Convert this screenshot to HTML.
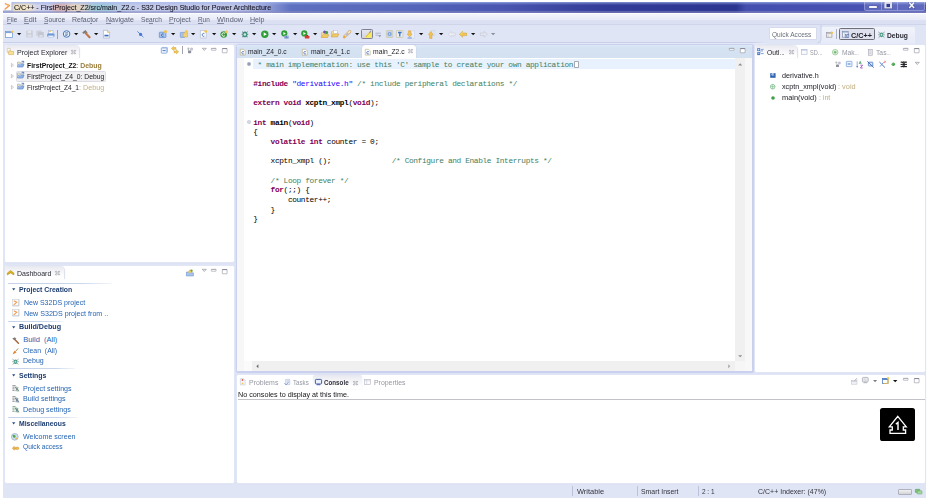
<!DOCTYPE html>
<html><head><meta charset="utf-8"><title>S32 Design Studio</title>
<style>
html,body{margin:0;padding:0;}
body{width:930px;height:500px;overflow:hidden;background:#fff;position:relative;font-family:"Liberation Sans",sans-serif;}
.r{position:absolute;display:block;box-sizing:border-box;}
.t{position:absolute;display:block;white-space:pre;line-height:10px;height:10px;transform-origin:0 50%;font-family:"Liberation Sans",sans-serif;}
.p{position:absolute;box-sizing:border-box;background:#fff;border:0.5px solid #e1e6f6;border-radius:2.5px;box-shadow:0.2px 0.3px 0.5px rgba(195,202,235,0.25);}
</style></head><body>
<div class="r" style="left:3.00px;top:13.50px;width:922.90px;height:484.00px;background:#e0e5f6;"></div>
<div class="r" style="left:3.00px;top:2.00px;width:922.90px;height:10.70px;background:linear-gradient(to right,#b9c2ea 0px,#bcc4ea 120px,#b4bce6 232px,#8f9bd6 266px,#5e70c0 288px,#5566ba 400px,#4a56b0 500px,#333c98 600px,#2b3590 733px,#444eae 743px,#4853b4 923px);"></div>
<div class="r" style="left:13.00px;top:2.60px;width:261.00px;height:9.40px;background:linear-gradient(to right,rgba(246,230,190,0.95) 0px,rgba(246,232,196,0.9) 15px,rgba(226,226,240,0.6) 24px,rgba(214,214,236,0.5) 36px,rgba(222,170,160,0.8) 44px,rgba(224,176,164,0.8) 52px,rgba(240,220,184,0.8) 60px,rgba(236,216,184,0.7) 70px,rgba(156,204,212,0.85) 80px,rgba(150,200,214,0.8) 94px,rgba(180,206,228,0.6) 104px,rgba(205,210,236,0.5) 122px,rgba(200,205,236,0.45) 226px,rgba(200,204,236,0) 258px);filter:blur(1.1px);"></div>
<div class="r" style="left:3.00px;top:2.00px;width:922.90px;height:10.70px;background:linear-gradient(to bottom,rgba(170,190,240,0.7) 0px,rgba(160,180,235,0.3) 1.6px,rgba(255,255,255,0) 3.2px,rgba(255,255,255,0) 8.4px,rgba(134,140,196,0.5) 9.4px,rgba(138,140,190,0.62) 10.7px);"></div>
<div class="r" style="left:3.00px;top:13.50px;width:922.90px;height:11.10px;background:linear-gradient(to bottom,#f2f4fb 0px,#e9ecf8 5.6px,#dadff2 6.6px,#dbe0f3 10.2px,#cfd4ea 10.5px,#d3d8ec 11.1px);"></div>
<div class="r" style="left:3.00px;top:42.00px;width:764.00px;height:1.00px;background:linear-gradient(to right,#c9cfe8 0%,#c9cfe8 98%,#dfe4f5 100%);"></div>
<div class="r" style="left:3.00px;top:43.00px;width:764.00px;height:0.80px;background:#e6eaf8;"></div>
<div class="p" style="left:3.90px;top:43.90px;width:230.80px;height:219.10px;"></div>
<div class="p" style="left:3.90px;top:264.50px;width:230.80px;height:219.60px;"></div>
<div class="p" style="left:236.20px;top:43.80px;width:516.70px;height:328.70px;border:1px solid #cad1ee;box-shadow:0.4px 0.6px 0.9px rgba(180,188,228,0.55);"></div>
<div class="p" style="left:753.60px;top:43.90px;width:172.00px;height:328.70px;"></div>
<div class="p" style="left:236.40px;top:374.00px;width:689.20px;height:110.00px;"></div>
<div class="r" style="left:237.40px;top:44.80px;width:514.40px;height:13.60px;background:linear-gradient(to bottom,#dde8f6 0px,#d5e2f2 3px,#d3e1f1 13.6px);border-radius:2px 2px 0 0;"></div>
<div class="r" style="left:361.50px;top:44.60px;width:54.30px;height:14.00px;background:#fff;border-radius:3px 3px 0 0;box-shadow:0 0 0.8px rgba(140,160,200,0.9);"></div>
<div class="r" style="left:361.50px;top:57.00px;width:54.30px;height:1.80px;background:#fff;"></div>
<div class="r" style="left:237.40px;top:58.40px;width:6.20px;height:312.60px;background:#f7f7f8;"></div>
<div class="r" style="left:253.00px;top:59.40px;width:481.80px;height:9.40px;background:#e8f2fe;"></div>
<div class="r" style="left:735.20px;top:58.40px;width:9.60px;height:302.80px;background:#f0f0f0;"></div>
<div class="r" style="left:744.80px;top:58.40px;width:7.00px;height:312.60px;background:#f8f8f8;"></div>
<div class="r" style="left:252.20px;top:361.20px;width:483.00px;height:9.60px;background:#f0f0f0;"></div>
<div class="r" style="left:735.20px;top:361.20px;width:9.60px;height:9.80px;background:#f6f6f6;"></div>
<div class="r" style="left:243.60px;top:361.20px;width:8.60px;height:9.80px;background:#fbfbfb;"></div>
<span class="t" style="left:14.30px;top:3.00px;font-size:7.7px;color:#14141f;transform:scaleX(0.9187);-webkit-text-stroke:0.1px #14141f;">C/C++ - FirstProject_Z2/src/main_Z2.c - S32 Design Studio for Power Architecture</span>
<span class="t" style="left:6.80px;top:15.00px;font-size:7.5px;color:#5c6074;transform:scaleX(0.8440);">File</span>
<div class="r" style="left:6.80px;top:22.75px;width:3.87px;height:0.50px;background:#868aa0;"></div>
<span class="t" style="left:24.10px;top:15.00px;font-size:7.5px;color:#5c6074;transform:scaleX(0.9672);">Edit</span>
<div class="r" style="left:24.10px;top:22.75px;width:4.84px;height:0.50px;background:#868aa0;"></div>
<span class="t" style="left:43.70px;top:15.00px;font-size:7.5px;color:#5c6074;transform:scaleX(0.8879);">Source</span>
<div class="r" style="left:43.70px;top:22.75px;width:4.44px;height:0.50px;background:#868aa0;"></div>
<span class="t" style="left:72.30px;top:15.00px;font-size:7.5px;color:#5c6074;transform:scaleX(0.9279);">Refactor</span>
<div class="r" style="left:90.48px;top:22.75px;width:1.93px;height:0.50px;background:#868aa0;"></div>
<span class="t" style="left:106.20px;top:15.00px;font-size:7.5px;color:#5c6074;transform:scaleX(0.9392);">Navigate</span>
<div class="r" style="left:106.20px;top:22.75px;width:5.09px;height:0.50px;background:#868aa0;"></div>
<span class="t" style="left:141.30px;top:15.00px;font-size:7.5px;color:#5c6074;transform:scaleX(0.8753);">Search</span>
<div class="r" style="left:149.33px;top:22.75px;width:3.65px;height:0.50px;background:#868aa0;"></div>
<span class="t" style="left:169.20px;top:15.00px;font-size:7.5px;color:#5c6074;transform:scaleX(0.9339);">Project</span>
<div class="r" style="left:169.20px;top:22.75px;width:4.67px;height:0.50px;background:#868aa0;"></div>
<span class="t" style="left:198.10px;top:15.00px;font-size:7.5px;color:#5c6074;transform:scaleX(0.8504);">Run</span>
<div class="r" style="left:198.10px;top:22.75px;width:4.61px;height:0.50px;background:#868aa0;"></div>
<span class="t" style="left:216.90px;top:15.00px;font-size:7.5px;color:#5c6074;transform:scaleX(0.9784);">Window</span>
<div class="r" style="left:216.90px;top:22.75px;width:6.93px;height:0.50px;background:#868aa0;"></div>
<span class="t" style="left:250.00px;top:15.00px;font-size:7.5px;color:#5c6074;transform:scaleX(0.9400);">Help</span>
<div class="r" style="left:250.00px;top:22.75px;width:5.09px;height:0.50px;background:#868aa0;"></div>
<div class="r" style="left:4.60px;top:44.60px;width:74.00px;height:13.80px;background:linear-gradient(to bottom,#e7e8ef 0%,#f3f3f7 35%,#fdfdfe 75%,#fff 100%);border-radius:3px 4.5px 0 0;box-shadow:0.5px 0 0.9px rgba(205,208,226,0.7);"></div>
<span class="t" style="left:16.80px;top:48.00px;font-size:7.5px;color:#2a2a34;transform:scaleX(0.9428);">Project Explorer</span>
<span class="t" style="left:26.70px;top:61.00px;font-size:7.5px;color:#111;font-weight:bold;transform:scaleX(0.9047);">FirstProject_Z2</span>
<span class="t" style="left:76.10px;top:61.00px;font-size:7.5px;color:#9a7d3c;font-weight:bold;transform:scaleX(0.9243);">: Debug</span>
<div class="r" style="left:15.50px;top:71.00px;width:90.30px;height:10.60px;background:#f0f0f2;border:1px solid #dcdce2;border-radius:1.5px;"></div>
<span class="t" style="left:26.70px;top:72.00px;font-size:7.5px;color:#1a1a22;transform:scaleX(0.9034);">FirstProject_Z4_0: Debug</span>
<span class="t" style="left:26.70px;top:83.00px;font-size:7.5px;color:#1a1a22;transform:scaleX(0.8786);">FirstProject_Z4_1</span>
<span class="t" style="left:78.70px;top:83.00px;font-size:7.5px;color:#c3b184;transform:scaleX(0.9593);">: Debug</span>
<span class="t" style="left:248.30px;top:47.00px;font-size:7.5px;color:#1c1c24;transform:scaleX(0.8926);">main_Z4_0.c</span>
<span class="t" style="left:310.50px;top:47.00px;font-size:7.5px;color:#1c1c24;transform:scaleX(0.8949);">main_Z4_1.c</span>
<span class="t" style="left:372.80px;top:47.00px;font-size:7.5px;color:#1c1c24;transform:scaleX(0.9025);">main_Z2.c</span>
<span class="t" style="left:257.62px;top:60.00px;font-size:7.8px;color:#3f7f5f;font-family:'Liberation Mono',monospace;letter-spacing:-0.356px;">* main implementation: use this 'C' sample to create your own application</span>
<span class="t" style="left:253.30px;top:79.00px;font-size:7.8px;color:#7f0055;font-weight:bold;font-family:'Liberation Mono',monospace;letter-spacing:-0.356px;">#include</span>
<span class="t" style="left:292.23px;top:79.00px;font-size:7.8px;color:#2a00ff;font-family:'Liberation Mono',monospace;letter-spacing:-0.356px;">"derivative.h"</span>
<span class="t" style="left:357.10px;top:79.00px;font-size:7.8px;color:#3f7f5f;font-family:'Liberation Mono',monospace;letter-spacing:-0.356px;">/* include peripheral declarations */</span>
<span class="t" style="left:253.30px;top:98.00px;font-size:7.8px;color:#7f0055;font-weight:bold;font-family:'Liberation Mono',monospace;letter-spacing:-0.356px;">extern</span>
<span class="t" style="left:283.57px;top:98.00px;font-size:7.8px;color:#7f0055;font-weight:bold;font-family:'Liberation Mono',monospace;letter-spacing:-0.356px;">void</span>
<span class="t" style="left:305.20px;top:98.00px;font-size:7.8px;color:#000000;font-weight:bold;font-family:'Liberation Mono',monospace;letter-spacing:-0.356px;">xcptn_xmpl</span>
<span class="t" style="left:348.45px;top:98.00px;font-size:7.8px;color:#000000;font-family:'Liberation Mono',monospace;letter-spacing:-0.356px;">(</span>
<span class="t" style="left:352.78px;top:98.00px;font-size:7.8px;color:#7f0055;font-weight:bold;font-family:'Liberation Mono',monospace;letter-spacing:-0.356px;">void</span>
<span class="t" style="left:370.08px;top:98.00px;font-size:7.8px;color:#000000;font-family:'Liberation Mono',monospace;letter-spacing:-0.356px;">);</span>
<span class="t" style="left:253.30px;top:118.00px;font-size:7.8px;color:#7f0055;font-weight:bold;font-family:'Liberation Mono',monospace;letter-spacing:-0.356px;">int</span>
<span class="t" style="left:270.60px;top:118.00px;font-size:7.8px;color:#000000;font-weight:bold;font-family:'Liberation Mono',monospace;letter-spacing:-0.356px;">main</span>
<span class="t" style="left:287.90px;top:118.00px;font-size:7.8px;color:#000000;font-family:'Liberation Mono',monospace;letter-spacing:-0.356px;">(</span>
<span class="t" style="left:292.23px;top:118.00px;font-size:7.8px;color:#7f0055;font-weight:bold;font-family:'Liberation Mono',monospace;letter-spacing:-0.356px;">void</span>
<span class="t" style="left:309.53px;top:118.00px;font-size:7.8px;color:#000000;font-family:'Liberation Mono',monospace;letter-spacing:-0.356px;">)</span>
<span class="t" style="left:253.30px;top:127.00px;font-size:7.8px;color:#000000;font-family:'Liberation Mono',monospace;letter-spacing:-0.356px;">{</span>
<span class="t" style="left:270.60px;top:137.00px;font-size:7.8px;color:#7f0055;font-weight:bold;font-family:'Liberation Mono',monospace;letter-spacing:-0.356px;">volatile</span>
<span class="t" style="left:309.53px;top:137.00px;font-size:7.8px;color:#7f0055;font-weight:bold;font-family:'Liberation Mono',monospace;letter-spacing:-0.356px;">int</span>
<span class="t" style="left:326.83px;top:137.00px;font-size:7.8px;color:#000000;font-family:'Liberation Mono',monospace;letter-spacing:-0.356px;">counter = 0;</span>
<span class="t" style="left:270.60px;top:156.00px;font-size:7.8px;color:#000000;font-family:'Liberation Mono',monospace;letter-spacing:-0.356px;">xcptn_xmpl ();</span>
<span class="t" style="left:391.70px;top:156.00px;font-size:7.8px;color:#3f7f5f;font-family:'Liberation Mono',monospace;letter-spacing:-0.356px;">/* Configure and Enable Interrupts */</span>
<span class="t" style="left:270.60px;top:176.00px;font-size:7.8px;color:#3f7f5f;font-family:'Liberation Mono',monospace;letter-spacing:-0.356px;">/* Loop forever */</span>
<span class="t" style="left:270.60px;top:185.00px;font-size:7.8px;color:#7f0055;font-weight:bold;font-family:'Liberation Mono',monospace;letter-spacing:-0.356px;">for</span>
<span class="t" style="left:283.57px;top:185.00px;font-size:7.8px;color:#000000;font-family:'Liberation Mono',monospace;letter-spacing:-0.356px;">(;;) {</span>
<span class="t" style="left:287.90px;top:195.00px;font-size:7.8px;color:#000000;font-family:'Liberation Mono',monospace;letter-spacing:-0.356px;">counter++;</span>
<span class="t" style="left:270.60px;top:205.00px;font-size:7.8px;color:#000000;font-family:'Liberation Mono',monospace;letter-spacing:-0.356px;">}</span>
<span class="t" style="left:253.30px;top:214.00px;font-size:7.8px;color:#000000;font-family:'Liberation Mono',monospace;letter-spacing:-0.356px;">}</span>
<div class="r" style="left:4.60px;top:265.80px;width:59.00px;height:13.60px;background:linear-gradient(to bottom,#e7e8ef 0%,#f3f3f7 35%,#fdfdfe 75%,#fff 100%);border-radius:3px 4.5px 0 0;box-shadow:0.5px 0 0.9px rgba(205,208,226,0.7);"></div>
<span class="t" style="left:16.80px;top:269.00px;font-size:7.5px;color:#2a2a34;transform:scaleX(0.9348);">Dashboard</span>
<div class="r" style="left:8.40px;top:282.80px;width:103.60px;height:1.10px;background:linear-gradient(to right,#c3d2ea 0%,#c9d7ec 70%,rgba(215,225,240,0.3) 100%);border-radius:1px;"></div>
<svg class="r" style="left:11.70px;top:288.10px" width="4" height="3" viewBox="0 0 4 3"><path d="M0.1,0.2 L3.3,0.2 L1.7,2.4 Z" fill="#2a4a80"/></svg>
<span class="t" style="left:18.80px;top:285.00px;font-size:7.5px;color:#1c3c70;font-weight:bold;transform:scaleX(0.9201);">Project Creation</span>
<span class="t" style="left:23.60px;top:298.00px;font-size:7.5px;color:#2565b4;transform:scaleX(0.9336);">New S32DS project</span>
<span class="t" style="left:23.60px;top:309.00px;font-size:7.5px;color:#2565b4;transform:scaleX(0.9484);">New S32DS project from ..</span>
<div class="r" style="left:8.40px;top:320.60px;width:55.30px;height:1.10px;background:linear-gradient(to right,#c3d2ea 0%,#c9d7ec 70%,rgba(215,225,240,0.3) 100%);border-radius:1px;"></div>
<svg class="r" style="left:11.70px;top:325.60px" width="4" height="3" viewBox="0 0 4 3"><path d="M0.1,0.2 L3.3,0.2 L1.7,2.4 Z" fill="#2a4a80"/></svg>
<span class="t" style="left:18.80px;top:322.00px;font-size:7.5px;color:#1c3c70;font-weight:bold;transform:scaleX(0.9533);">Build/Debug</span>
<span class="t" style="left:23.20px;top:335.00px;font-size:7.5px;color:#2565b4;">Build  (All)</span>
<span class="t" style="left:23.20px;top:346.00px;font-size:7.5px;color:#2565b4;transform:scaleX(0.9193);">Clean  (All)</span>
<span class="t" style="left:23.20px;top:356.00px;font-size:7.5px;color:#2565b4;transform:scaleX(0.9366);">Debug</span>
<div class="r" style="left:8.40px;top:368.00px;width:66.40px;height:1.10px;background:linear-gradient(to right,#c3d2ea 0%,#c9d7ec 70%,rgba(215,225,240,0.3) 100%);border-radius:1px;"></div>
<svg class="r" style="left:11.70px;top:374.20px" width="4" height="3" viewBox="0 0 4 3"><path d="M0.1,0.2 L3.3,0.2 L1.7,2.4 Z" fill="#2a4a80"/></svg>
<span class="t" style="left:18.80px;top:371.00px;font-size:7.5px;color:#1c3c70;font-weight:bold;transform:scaleX(0.9295);">Settings</span>
<span class="t" style="left:22.90px;top:384.00px;font-size:7.5px;color:#2565b4;transform:scaleX(0.9479);">Project settings</span>
<span class="t" style="left:22.90px;top:394.00px;font-size:7.5px;color:#2565b4;transform:scaleX(0.9550);">Build settings</span>
<span class="t" style="left:22.90px;top:405.00px;font-size:7.5px;color:#2565b4;transform:scaleX(0.9554);">Debug settings</span>
<div class="r" style="left:8.40px;top:417.10px;width:69.60px;height:1.10px;background:linear-gradient(to right,#c3d2ea 0%,#c9d7ec 70%,rgba(215,225,240,0.3) 100%);border-radius:1px;"></div>
<svg class="r" style="left:11.70px;top:422.30px" width="4" height="3" viewBox="0 0 4 3"><path d="M0.1,0.2 L3.3,0.2 L1.7,2.4 Z" fill="#2a4a80"/></svg>
<span class="t" style="left:18.80px;top:419.00px;font-size:7.5px;color:#1c3c70;font-weight:bold;transform:scaleX(0.9109);">Miscellaneous</span>
<span class="t" style="left:22.90px;top:432.00px;font-size:7.5px;color:#2565b4;transform:scaleX(0.9423);">Welcome screen</span>
<span class="t" style="left:22.90px;top:442.00px;font-size:7.5px;color:#2565b4;transform:scaleX(0.8857);">Quick access</span>
<div class="r" style="left:312.60px;top:374.90px;width:49.00px;height:13.90px;background:linear-gradient(to bottom,#e7e8ef 0%,#f3f3f7 35%,#fdfdfe 75%,#fff 100%);border-radius:3px 3px 0 0;box-shadow:0 0 0.9px rgba(190,195,220,0.9);"></div>
<span class="t" style="left:248.90px;top:378.00px;font-size:7.5px;color:#9698a2;transform:scaleX(0.9281);">Problems</span>
<span class="t" style="left:293.20px;top:378.00px;font-size:7.5px;color:#9698a2;transform:scaleX(0.8189);">Tasks</span>
<span class="t" style="left:324.40px;top:378.00px;font-size:7.5px;color:#30303a;font-weight:bold;transform:scaleX(0.8315);">Console</span>
<span class="t" style="left:373.50px;top:378.00px;font-size:7.5px;color:#9698a2;transform:scaleX(0.9215);">Properties</span>
<span class="t" style="left:238.10px;top:390.00px;font-size:7.5px;color:#16161a;transform:scaleX(0.9604);">No consoles to display at this time.</span>
<div class="r" style="left:238.00px;top:399.00px;width:686.60px;height:0.80px;background:#c2c2c7;"></div>
<div class="r" style="left:572.15px;top:485.60px;width:0.90px;height:10.40px;background:#bcc2d8;"></div>
<div class="r" style="left:637.35px;top:485.60px;width:0.90px;height:10.40px;background:#bcc2d8;"></div>
<div class="r" style="left:697.95px;top:485.60px;width:0.90px;height:10.40px;background:#bcc2d8;"></div>
<span class="t" style="left:577.00px;top:487.00px;font-size:7.5px;color:#33343c;transform:scaleX(0.9901);">Writable</span>
<span class="t" style="left:640.90px;top:487.00px;font-size:7.5px;color:#33343c;transform:scaleX(0.9181);">Smart Insert</span>
<span class="t" style="left:702.30px;top:487.00px;font-size:7.5px;color:#33343c;transform:scaleX(0.8565);">2 : 1</span>
<span class="t" style="left:757.70px;top:487.00px;font-size:7.5px;color:#33343c;transform:scaleX(0.9349);">C/C++ Indexer: (47%)</span>
<div class="r" style="left:754.80px;top:44.60px;width:42.40px;height:13.80px;background:linear-gradient(to bottom,#e7e8ef 0%,#f3f3f7 35%,#fdfdfe 75%,#fff 100%);border-radius:3px 4.5px 0 0;box-shadow:0.5px 0 0.9px rgba(205,208,226,0.7);"></div>
<span class="t" style="left:766.60px;top:48.00px;font-size:7.5px;color:#1c1c24;transform:scaleX(0.8942);">Outl</span>
<span class="t" style="left:779.80px;top:48.00px;font-size:7.5px;color:#1c1c24;transform:scaleX(0.7039);">...</span>
<span class="t" style="left:809.90px;top:48.00px;font-size:7.5px;color:#9698a2;transform:scaleX(0.7390);">SD</span>
<span class="t" style="left:818.40px;top:48.00px;font-size:7.5px;color:#9698a2;transform:scaleX(0.6879);">...</span>
<span class="t" style="left:841.70px;top:48.00px;font-size:7.5px;color:#9698a2;transform:scaleX(0.8963);">Mak</span>
<span class="t" style="left:855.20px;top:48.00px;font-size:7.5px;color:#9698a2;transform:scaleX(0.5919);">...</span>
<span class="t" style="left:875.90px;top:48.00px;font-size:7.5px;color:#9698a2;transform:scaleX(0.8997);">Tas</span>
<span class="t" style="left:887.10px;top:48.00px;font-size:7.5px;color:#9698a2;transform:scaleX(0.5919);">...</span>
<span class="t" style="left:781.90px;top:71.00px;font-size:7.5px;color:#1a1a22;transform:scaleX(0.9569);">derivative.h</span>
<span class="t" style="left:781.90px;top:82.00px;font-size:7.5px;color:#1a1a22;transform:scaleX(0.9614);">xcptn_xmpl(void)</span>
<span class="t" style="left:836.40px;top:82.00px;font-size:7.5px;color:#bfae80;transform:scaleX(0.9795);"> : void</span>
<span class="t" style="left:781.90px;top:93.00px;font-size:7.5px;color:#1a1a22;transform:scaleX(0.9883);">main(void)</span>
<span class="t" style="left:816.50px;top:93.00px;font-size:7.5px;color:#bfae80;transform:scaleX(0.9385);"> : int</span>
<div class="r" style="left:820.60px;top:26.80px;width:94.00px;height:16.80px;background:linear-gradient(to bottom,#f1f3fb,#e6eaf8);border-radius:2px 2px 0 0;"></div>
<div class="r" style="left:769.40px;top:27.20px;width:47.70px;height:12.70px;background:#fff;border:1px solid #d6daea;border-radius:1px;"></div>
<span class="t" style="left:771.60px;top:30.00px;font-size:7.8px;color:#6a6e7c;transform:scaleX(0.8416);">Quick Access</span>
<div class="r" style="left:836.00px;top:29.00px;width:0.90px;height:10.00px;background:#aab0c4;"></div>
<svg class="r" style="left:817.00px;top:25.00px;overflow:visible" width="5" height="19" viewBox="0 0 5 19"><path d="M4.0,0 L4.0,14.5 Q4.0,17.6 0.6,17.8" fill="none" stroke="#c3c9e2" stroke-width="0.8"/></svg>
<div class="r" style="left:839.00px;top:28.00px;width:35.80px;height:11.80px;background:#dfe2ee;border:1px solid #6c6e78;border-radius:1.5px;"></div>
<span class="t" style="left:850.60px;top:31.00px;font-size:8.0px;color:#22222a;font-weight:bold;transform:scaleX(0.9083);">C/C++</span>
<span class="t" style="left:886.50px;top:31.00px;font-size:8.0px;color:#2a2a34;font-weight:bold;transform:scaleX(0.8358);">Debug</span>
<svg class="r" style="left:3.20px;top:2.20px;overflow:visible" width="9" height="9" viewBox="0 0 9 9"><rect x="0" y="0" width="8.8" height="8.6" fill="#fcfcfd"/><path d="M8.8,0.4 L8.8,8.6 L0.2,8.6" fill="none" stroke="#b9bccb" stroke-width="0.7"/><path d="M2.5,1.9 L6.4,3.5 L2.2,7.0" fill="none" stroke="#f39242" stroke-width="1.5" stroke-linejoin="round" stroke-linecap="round" opacity="0.92"/><path d="M3.2,2.5 L5.8,3.5" stroke="#fbc684" stroke-width="0.7" fill="none"/></svg>
<div class="r" style="left:863.70px;top:2.00px;width:61.70px;height:8.60px;background:rgba(255,255,255,0.13);border:0.8px solid rgba(225,230,255,0.35);border-top:none;border-radius:0 0 2px 2.5px;"></div>
<div class="r" style="left:881.30px;top:2.00px;width:0.70px;height:8.40px;background:rgba(225,230,255,0.35);"></div>
<div class="r" style="left:897.30px;top:2.00px;width:0.70px;height:8.40px;background:rgba(225,230,255,0.35);"></div>
<div class="r" style="left:868.80px;top:6.30px;width:7.80px;height:1.60px;background:#f4f5fa;box-shadow:0 0 0.8px rgba(40,40,80,0.9);border-radius:0.4px;"></div>
<svg class="r" style="left:884.00px;top:2.00px;overflow:visible" width="8.6" height="7" viewBox="0 0 8.6 7"><rect x="0" y="0" width="8.4" height="6.9" rx="0.7" fill="#262c70" opacity="0.55"/><rect x="0.3" y="0" width="7.8" height="6.6" rx="0.5" fill="#dddfea"/><rect x="2.5" y="1.9" width="3.5" height="3.2" fill="#2f3a96"/></svg>
<svg class="r" style="left:907.6px;top:2.0px;overflow:hidden" width="8" height="7" viewBox="0 0 8 7"><path d="M1.3,0.5 L6.1,6.0 M6.1,0.5 L1.3,6.0" stroke="#3a3f80" stroke-width="2.4" stroke-linecap="square" opacity="0.4"/><path d="M1.3,0.5 L6.1,6.0 M6.1,0.5 L1.3,6.0" stroke="#fbfbfe" stroke-width="1.35" stroke-linecap="butt"/></svg>
<svg class="r" style="left:4.80px;top:30.10px;overflow:visible" width="9" height="8" viewBox="0 0 9 8"><rect x="0.4" y="1.6" width="7" height="5.8" fill="#fdfeff" stroke="#7099d4" stroke-width="0.75"/><rect x="0.4" y="1.6" width="7" height="1.5" fill="#7da4dc"/><path d="M7.2,0 L7.7,1.0 L8.8,1.2 L8.0,2.0 L8.2,3.1 L7.2,2.5 L6.2,3.1 L6.4,2.0 L5.6,1.2 L6.7,1.0 Z" fill="#f2c648"/></svg>
<svg class="r" style="left:16.90px;top:33.20px;overflow:visible" width="4.4" height="2.4" viewBox="0 0 4.4 2.4"><path d="M0,0 L4.3,0 L2.15,2.3 Z" fill="#111"/></svg>
<svg class="r" style="left:25.80px;top:30.10px;overflow:visible" width="7" height="8" viewBox="0 0 7 8"><rect x="0.3" y="0.6" width="6.4" height="6.8" rx="0.6" fill="#c9ccd6"/><rect x="1.6" y="0.6" width="3.6" height="2.6" fill="#e4e6ee"/><rect x="1.5" y="4.4" width="4" height="3" fill="#dcdee8"/></svg>
<svg class="r" style="left:36.10px;top:30.10px;overflow:visible" width="8" height="8" viewBox="0 0 8 8"><rect x="0.2" y="0.4" width="5.6" height="5.6" rx="0.6" fill="#cfd2dc"/><rect x="2.2" y="2.0" width="5.6" height="5.6" rx="0.6" fill="#c4c7d2"/><rect x="3.4" y="5.0" width="3.2" height="2.6" fill="#dcdee8"/></svg>
<svg class="r" style="left:46.80px;top:30.10px;overflow:visible" width="8" height="8" viewBox="0 0 8 8"><rect x="1.6" y="0.3" width="4.4" height="3.6" fill="#fff" stroke="#9ab2da" stroke-width="0.55"/><rect x="2.0" y="0.7" width="2.2" height="1.5" fill="#f2cc66"/><rect x="0.2" y="3.6" width="7.3" height="3.2" rx="0.9" fill="#6f9ada"/><rect x="1.1" y="5.5" width="5.4" height="2.0" fill="#e6eefa" stroke="#8fb0e0" stroke-width="0.35"/></svg>
<div class="r" style="left:57.25px;top:29.70px;width:0.90px;height:9.50px;background:#9aa0b8;"></div>
<svg class="r" style="left:62.80px;top:30.10px;overflow:visible" width="7.4" height="8" viewBox="0 0 7.4 8"><circle cx="3.6" cy="4" r="3.3" fill="#e8f0fa" stroke="#4a78b4" stroke-width="1"/><path d="M2.2,2.8 L5,2.8 M2.2,4.2 L5,4.2 M2.2,5.5 L4.2,5.5" stroke="#3a66a4" stroke-width="0.7"/></svg>
<svg class="r" style="left:74.20px;top:33.20px;overflow:visible" width="4.4" height="2.4" viewBox="0 0 4.4 2.4"><path d="M0,0 L4.3,0 L2.15,2.3 Z" fill="#111"/></svg>
<svg class="r" style="left:82.30px;top:30.10px;overflow:visible" width="8.4" height="8" viewBox="0 0 8.4 8"><path d="M0.2,2.4 L3.4,0.1 L5.6,2.4 L4.6,3.4 L3.6,2.6 L1.6,4.0 Z" fill="#7f7a78"/><path d="M3.8,3.2 L7.6,7.2" stroke="#b86a38" stroke-width="2.0" stroke-linecap="round"/><path d="M3.9,3.0 L7.4,6.7" stroke="#d89a62" stroke-width="0.6" stroke-linecap="round"/></svg>
<svg class="r" style="left:94.10px;top:33.20px;overflow:visible" width="4.4" height="2.4" viewBox="0 0 4.4 2.4"><path d="M0,0 L4.3,0 L2.15,2.3 Z" fill="#111"/></svg>
<svg class="r" style="left:102.90px;top:30.10px;overflow:visible" width="7.4" height="8.4" viewBox="0 0 7.4 8.4"><path d="M0.4,0.3 L4.6,0.3 L6.6,2.3 L6.6,8 L0.4,8 Z" fill="#fff" stroke="#98a2b8" stroke-width="0.6"/><path d="M4.4,0.4 L4.4,2.4 L6.6,2.4" fill="#f1d27a" stroke="#c9a64a" stroke-width="0.4"/><path d="M1.4,5.6 L5.6,5.6" stroke="#3f6fc0" stroke-width="1.7"/></svg>
<svg class="r" style="left:136.80px;top:31.10px;overflow:visible" width="7" height="7" viewBox="0 0 7 7"><path d="M0.4,0.4 L6.4,6.2" stroke="#5580cc" stroke-width="0.9"/><circle cx="3.6" cy="3.4" r="1.6" fill="#4d7ad0"/></svg>
<svg class="r" style="left:159.20px;top:30.10px;overflow:visible" width="8.4" height="8" viewBox="0 0 8.4 8"><rect x="0.3" y="2.2" width="6.6" height="5.4" rx="0.6" fill="#a9c2ea" stroke="#5f88cc" stroke-width="0.7"/><path d="M4.6,4.2 A1.3,1.3 0 1 0 4.6,6.2" stroke="#2f5cac" stroke-width="0.8" fill="none"/><circle cx="6.6" cy="1.6" r="1.6" fill="#f2c44e"/></svg>
<svg class="r" style="left:171.20px;top:33.20px;overflow:visible" width="4.4" height="2.4" viewBox="0 0 4.4 2.4"><path d="M0,0 L4.3,0 L2.15,2.3 Z" fill="#111"/></svg>
<svg class="r" style="left:179.80px;top:30.10px;overflow:visible" width="8" height="8" viewBox="0 0 8 8"><rect x="0.3" y="2.4" width="4.6" height="5" rx="0.5" fill="#a9c2ea" stroke="#6a90d0" stroke-width="0.6"/><path d="M3.2,2.8 L7.6,2.8 L7.6,7 L3.2,7 Z" fill="#f3d37a" stroke="#d2a640" stroke-width="0.5"/><circle cx="6.4" cy="1.6" r="1.5" fill="#f4c850"/></svg>
<svg class="r" style="left:191.30px;top:33.20px;overflow:visible" width="4.4" height="2.4" viewBox="0 0 4.4 2.4"><path d="M0,0 L4.3,0 L2.15,2.3 Z" fill="#111"/></svg>
<svg class="r" style="left:200.40px;top:30.10px;overflow:visible" width="7.4" height="8.4" viewBox="0 0 7.4 8.4"><path d="M0.4,0.6 L4.6,0.6 L6.2,2.2 L6.2,8 L0.4,8 Z" fill="#fff" stroke="#a8b0c4" stroke-width="0.6"/><path d="M4.4,3.6 A1.5,1.5 0 1 0 4.4,6.2" stroke="#3a66b8" stroke-width="0.9" fill="none"/><circle cx="5.8" cy="1.4" r="1.4" fill="#f2c44e"/></svg>
<svg class="r" style="left:211.60px;top:33.20px;overflow:visible" width="4.4" height="2.4" viewBox="0 0 4.4 2.4"><path d="M0,0 L4.3,0 L2.15,2.3 Z" fill="#111"/></svg>
<svg class="r" style="left:219.90px;top:30.10px;overflow:visible" width="8.4" height="8.2" viewBox="0 0 8.4 8.2"><circle cx="3.7" cy="4.5" r="3.3" fill="#3c9a3e"/><path d="M4.9,3.4 A1.7,1.7 0 1 0 4.9,5.7" stroke="#fff" stroke-width="1" fill="none"/><circle cx="6.4" cy="1.9" r="1.4" fill="#f2c44e"/></svg>
<svg class="r" style="left:231.90px;top:33.20px;overflow:visible" width="4.4" height="2.4" viewBox="0 0 4.4 2.4"><path d="M0,0 L4.3,0 L2.15,2.3 Z" fill="#111"/></svg>
<svg class="r" style="left:240.50px;top:30.10px;overflow:visible" width="8" height="8.2" viewBox="0 0 8 8.2"><path d="M1.0,1.6 L2.6,3.0 M6.8,1.6 L5.2,3.0 M0.6,4.4 L1.8,4.4 M6.0,4.4 L7.2,4.4 M1.0,7.2 L2.6,5.8 M6.8,7.2 L5.2,5.8" stroke="#3a6a60" stroke-width="0.7"/><ellipse cx="3.9" cy="4.4" rx="2.5" ry="2.9" fill="#3f8f7c"/><circle cx="3.9" cy="4.5" r="1.3" fill="#cfeadf"/></svg>
<svg class="r" style="left:252.10px;top:33.20px;overflow:visible" width="4.4" height="2.4" viewBox="0 0 4.4 2.4"><path d="M0,0 L4.3,0 L2.15,2.3 Z" fill="#111"/></svg>
<svg class="r" style="left:260.70px;top:30.10px;overflow:visible" width="8" height="8.2" viewBox="0 0 8 8.2"><circle cx="3.8" cy="4.2" r="3.7" fill="#2f9e35"/><path d="M2.7,2.3 L5.9,4.2 L2.7,6.1 Z" fill="#fff"/></svg>
<svg class="r" style="left:272.20px;top:33.20px;overflow:visible" width="4.4" height="2.4" viewBox="0 0 4.4 2.4"><path d="M0,0 L4.3,0 L2.15,2.3 Z" fill="#111"/></svg>
<svg class="r" style="left:280.50px;top:29.70px;overflow:visible" width="8.4" height="8.8" viewBox="0 0 8.4 8.8"><circle cx="3.3" cy="3.4" r="3.1" fill="#2f9e35"/><path d="M2.4,1.9 L4.9,3.4 L2.4,4.9 Z" fill="#fff"/><rect x="3.2" y="5.6" width="4.6" height="3" rx="0.5" fill="#9eb4d8"/><path d="M4.2,8.4 L4.2,6.6 M5.5,8.4 L5.5,6.0 M6.8,8.4 L6.8,7" stroke="#466fb2" stroke-width="0.6"/></svg>
<svg class="r" style="left:292.50px;top:33.20px;overflow:visible" width="4.4" height="2.4" viewBox="0 0 4.4 2.4"><path d="M0,0 L4.3,0 L2.15,2.3 Z" fill="#111"/></svg>
<svg class="r" style="left:300.80px;top:29.70px;overflow:visible" width="8.6" height="8.8" viewBox="0 0 8.6 8.8"><circle cx="3.3" cy="3.4" r="3.1" fill="#2f9e35"/><path d="M2.4,1.9 L4.9,3.4 L2.4,4.9 Z" fill="#fff"/><rect x="3.8" y="5.8" width="4.6" height="2.8" rx="0.5" fill="#d63a30"/><rect x="5.2" y="5.0" width="1.8" height="1" fill="#a02a24"/></svg>
<svg class="r" style="left:312.80px;top:33.20px;overflow:visible" width="4.4" height="2.4" viewBox="0 0 4.4 2.4"><path d="M0,0 L4.3,0 L2.15,2.3 Z" fill="#111"/></svg>
<svg class="r" style="left:320.60px;top:29.70px;overflow:visible" width="8.4" height="8.2" viewBox="0 0 8.4 8.2"><path d="M0.4,2.8 L2.6,2.8 L3.2,3.6 L6.6,3.6 L6.6,7.4 L0.4,7.4 Z" fill="#f6e2a4" stroke="#cfa042" stroke-width="0.5"/><path d="M1.6,4.8 L8.0,4.8 L6.6,7.4 L0.4,7.4 Z" fill="#f2cc66" stroke="#cfa042" stroke-width="0.5"/><circle cx="3.6" cy="2.0" r="1.5" fill="#6c50ae"/><circle cx="5.6" cy="2.6" r="1.5" fill="#3f9c4c"/></svg>
<svg class="r" style="left:331.00px;top:30.30px;overflow:visible" width="8.4" height="7.6" viewBox="0 0 8.4 7.6"><path d="M0.4,1.8 L2.6,1.8 L3.2,2.6 L6.6,2.6 L6.6,6.8 L0.4,6.8 Z" fill="#f6e2a4" stroke="#cfa042" stroke-width="0.5"/><rect x="2.6" y="0.6" width="3.8" height="3.0" fill="#fff" stroke="#a9b4cc" stroke-width="0.4"/><path d="M1.6,4.0 L8.0,4.0 L6.6,6.8 L0.4,6.8 Z" fill="#f2cc66" stroke="#cfa042" stroke-width="0.5"/></svg>
<svg class="r" style="left:343.20px;top:30.10px;overflow:visible" width="9" height="8.2" viewBox="0 0 9 8.2"><path d="M1.4,6.8 L6.8,1.6" stroke="#c9a266" stroke-width="3.0" stroke-linecap="round"/><path d="M1.4,6.8 L6.8,1.6" stroke="#f6e6c4" stroke-width="1.9" stroke-linecap="round"/><path d="M3.0,5.4 L5.2,3.2" stroke="#b8bcc8" stroke-width="1.9"/><path d="M0.9,7.3 L1.8,6.4" stroke="#f0a030" stroke-width="1.6" stroke-linecap="round"/></svg>
<svg class="r" style="left:354.80px;top:33.20px;overflow:visible" width="4.4" height="2.4" viewBox="0 0 4.4 2.4"><path d="M0,0 L4.3,0 L2.15,2.3 Z" fill="#111"/></svg>
<div class="r" style="left:361.30px;top:28.90px;width:11.50px;height:10.40px;background:linear-gradient(to bottom,#e6e8f0,#cfd3de);border:1px solid #7c8090;border-radius:1.4px;"></div>
<svg class="r" style="left:362.60px;top:29.70px;overflow:visible" width="9" height="9" viewBox="0 0 9 9"><path d="M1.0,7.8 L8.0,7.8 L8.0,1.2 Q5.0,5.6 1.0,7.8 Z" fill="#f6ea60"/><path d="M3.2,6.6 L7.6,1.6" stroke="#e6c040" stroke-width="1.1" stroke-linecap="round"/><path d="M6.6,2.6 L7.8,1.0" stroke="#9a9aa6" stroke-width="1.2" stroke-linecap="round"/></svg>
<svg class="r" style="left:374.80px;top:31.50px;overflow:visible" width="7" height="6" viewBox="0 0 7 6"><path d="M0.4,1.2 L5.8,1.2 M0.4,3.2 L3,3.2" stroke="#aab0be" stroke-width="0.9"/><path d="M3,3 L6.4,3 L4.7,5.4 Z" fill="#9aa0b0"/></svg>
<svg class="r" style="left:385.60px;top:30.30px;overflow:visible" width="7.4" height="8" viewBox="0 0 7.4 8"><rect x="0.4" y="0.5" width="6.4" height="7" rx="0.5" fill="#cfdef4" stroke="#cfc6a4" stroke-width="0.8"/><rect x="1.2" y="1.3" width="4.8" height="5.4" fill="#bcd0ee"/><circle cx="3.6" cy="4" r="1.5" fill="none" stroke="#5f8ad0" stroke-width="0.8"/></svg>
<svg class="r" style="left:396.30px;top:30.30px;overflow:visible" width="7.6" height="8" viewBox="0 0 7.6 8"><rect x="0.4" y="0.5" width="6.6" height="7" rx="0.5" fill="#e6eefa" stroke="#cfc6a4" stroke-width="0.8"/><path d="M2,2.5 L5.6,2.5 M3.8,2.5 L3.8,6.4" stroke="#3a72c4" stroke-width="1.3"/></svg>
<svg class="r" style="left:407.20px;top:29.50px;overflow:visible" width="8" height="9" viewBox="0 0 8 9"><path d="M5.6,0.6 L7.2,0.6 L7.2,8.4 L5.6,8.4" fill="#f4f7fc" stroke="#b4c4e0" stroke-width="0.5"/><path d="M1.4,0.8 L3.8,0.8 L3.8,4.0 L5.0,4.0 L2.6,7.0 L0.2,4.0 L1.4,4.0 Z" fill="#f2c450" stroke="#d09a34" stroke-width="0.45"/><path d="M0.6,8.0 L4.8,8.0" stroke="#5f8ad0" stroke-width="0.9"/></svg>
<svg class="r" style="left:418.90px;top:33.20px;overflow:visible" width="4.4" height="2.4" viewBox="0 0 4.4 2.4"><path d="M0,0 L4.3,0 L2.15,2.3 Z" fill="#111"/></svg>
<svg class="r" style="left:428.20px;top:29.50px;overflow:visible" width="8" height="9" viewBox="0 0 8 9"><path d="M3.4,0.4 L6.8,0.4 L6.8,5.4 L3.4,5.4 Z" fill="#f0f4fb" stroke="#b4c4e0" stroke-width="0.5"/><path d="M4.2,1.8 L6.0,1.8 M4.2,3.2 L6.0,3.2" stroke="#a9bce0" stroke-width="0.5"/><path d="M1.6,8.4 L4.0,8.4 L4.0,4.6 L5.2,4.6 L2.8,1.4 L0.4,4.6 L1.6,4.6 Z" fill="#f2c450" stroke="#d09a34" stroke-width="0.45"/></svg>
<svg class="r" style="left:439.40px;top:33.20px;overflow:visible" width="4.4" height="2.4" viewBox="0 0 4.4 2.4"><path d="M0,0 L4.3,0 L2.15,2.3 Z" fill="#111"/></svg>
<svg class="r" style="left:448.00px;top:30.90px;overflow:visible" width="7.6" height="6.6" viewBox="0 0 7.6 6.6"><path d="M0.3,3.3 L3.4,0.4 L3.4,2.0 L7.3,2.0 L7.3,4.6 L3.4,4.6 L3.4,6.2 Z" fill="#eceef4" stroke="#c0c4d2" stroke-width="0.45"/></svg>
<svg class="r" style="left:459.40px;top:30.90px;overflow:visible" width="8" height="6.6" viewBox="0 0 8 6.6"><path d="M0.3,3.3 L3.6,0.3 L3.6,2.0 L7.6,2.0 L7.6,4.6 L3.6,4.6 L3.6,6.3 Z" fill="#f2c850" stroke="#cf9c34" stroke-width="0.5"/><path d="M1.4,3.1 L3.9,1.2" stroke="#f8e4a0" stroke-width="0.6"/></svg>
<svg class="r" style="left:470.50px;top:33.20px;overflow:visible" width="4.4" height="2.4" viewBox="0 0 4.4 2.4"><path d="M0,0 L4.3,0 L2.15,2.3 Z" fill="#111"/></svg>
<svg class="r" style="left:480.20px;top:30.90px;overflow:visible" width="8" height="6.6" viewBox="0 0 8 6.6"><path d="M7.5,3.3 L4.2,0.3 L4.2,2.0 L0.3,2.0 L0.3,4.6 L4.2,4.6 L4.2,6.3 Z" fill="#e3e5ee" stroke="#bcc0d0" stroke-width="0.5"/></svg>
<svg class="r" style="left:491.30px;top:33.20px;overflow:visible" width="4.4" height="2.4" viewBox="0 0 4.4 2.4"><path d="M0,0 L4.3,0 L2.15,2.3 Z" fill="#8a8c98"/></svg>
<svg class="r" style="left:7.00px;top:48.20px;overflow:visible" width="7" height="7" viewBox="0 0 7 7"><rect x="0.3" y="0.4" width="3.0" height="4.2" rx="0.4" fill="#fff" stroke="#b4a676" stroke-width="0.5"/><path d="M1.7,2.8 L3.5,2.8 L4.0,3.5 L6.6,3.5 L6.6,6.6 L1.7,6.6 Z" fill="#f8e294" stroke="#cfa244" stroke-width="0.5"/></svg>
<svg class="r" style="left:71.10px;top:50.00px;overflow:visible" width="5" height="4.2" viewBox="0 0 5 4.2"><path d="M0.5,0.4 L1.6,0.4 L2.5,1.3 L3.4,0.4 L4.5,0.4 L4.5,0.9 L3.3,2.1 L4.5,3.3 L4.5,3.8 L3.4,3.8 L2.5,2.9 L1.6,3.8 L0.5,3.8 L0.5,3.3 L1.7,2.1 L0.5,0.9 Z" fill="#fafafc" stroke="#80828e" stroke-width="0.6"/></svg>
<svg class="r" style="left:161.10px;top:47.30px;overflow:visible" width="7" height="6.6" viewBox="0 0 7 6.6"><rect x="0.9" y="0.3" width="5.6" height="5" rx="0.5" fill="#c9daf2" stroke="#8fb0de" stroke-width="0.5"/><rect x="0.3" y="1.0" width="5.6" height="5.2" rx="0.5" fill="#eef4fc" stroke="#6f98d4" stroke-width="0.7"/><path d="M1.6,3.6 L4.6,3.6" stroke="#3f6fc0" stroke-width="0.9"/></svg>
<svg class="r" style="left:171.30px;top:46.00px;overflow:visible" width="8" height="8.2" viewBox="0 0 8 8.2"><path d="M0.3,2.4 L2.6,0.3 L2.6,1.5 L5.0,1.5 L5.0,3.3 L2.6,3.3 L2.6,4.5 Z" fill="#f2c852" stroke="#c99a30" stroke-width="0.4"/><path d="M7.7,5.8 L5.4,3.7 L5.4,4.9 L3.0,4.9 L3.0,6.7 L5.4,6.7 L5.4,7.9 Z" fill="#f2c852" stroke="#c99a30" stroke-width="0.4"/></svg>
<div class="r" style="left:182.00px;top:46.20px;width:0.80px;height:8.20px;background:#a2a4b0;"></div>
<svg class="r" style="left:187.30px;top:47.20px;overflow:visible" width="6.6" height="6.6" viewBox="0 0 6.6 6.6"><circle cx="1.4" cy="1.6" r="1.1" fill="#b6b8c2"/><circle cx="4.6" cy="2" r="1.6" fill="#c2c4ce"/><rect x="1" y="3.4" width="3.2" height="2.8" rx="0.6" fill="#8e909c"/><path d="M1.4,2 L1.4,4" stroke="#a2a4b0" stroke-width="0.7"/></svg>
<svg class="r" style="left:202.20px;top:47.60px;overflow:visible" width="4.6" height="2.8" viewBox="0 0 4.6 2.8"><path d="M0.3,0.3 L4.3,0.3 L2.3,2.5 Z" fill="#fff" stroke="#7c7e8a" stroke-width="0.6"/></svg>
<svg class="r" style="left:211.00px;top:47.70px;overflow:visible" width="5.4" height="2.6" viewBox="0 0 5.4 2.6"><rect x="0.3" y="0.35" width="4.8" height="1.9" rx="0.3" fill="#fff" stroke="#8e909c" stroke-width="0.55"/><path d="M0.3,0.45 L5.1,0.45" stroke="#8e909c" stroke-width="0.5"/></svg>
<svg class="r" style="left:222.10px;top:47.70px;overflow:visible" width="5.4" height="5.2" viewBox="0 0 5.4 5.2"><rect x="0.3" y="0.5" width="4.8" height="4.3" rx="0.3" fill="#fff" stroke="#858793" stroke-width="0.55"/><path d="M0.3,0.6 L5.1,0.6" stroke="#7c7e8a" stroke-width="0.9"/></svg>
<svg class="r" style="left:10.60px;top:63.20px;overflow:visible" width="3" height="4.4" viewBox="0 0 3 4.4"><path d="M0.4,0.4 L2.5,2.2 L0.4,4 Z" fill="#fff" stroke="#a2a4ae" stroke-width="0.55"/></svg>
<svg class="r" style="left:16.80px;top:60.80px;overflow:visible" width="7.4" height="6.4" viewBox="0 0 7.4 6.4"><path d="M0.5,1.0 L2.6,1.0 L3.2,1.8 L6.0,1.8 L6.0,5.8 L0.5,5.8 Z" fill="#f6ecc2" stroke="#7a96cc" stroke-width="0.5"/><path d="M1.7,3.0 L7.1,3.0 L5.9,6.0 L0.4,6.0 Z" fill="#8fb2e6" stroke="#5a80c8" stroke-width="0.5"/><path d="M0.9,5.6 L2.0,3.4 L4.0,3.4" stroke="#c6daf6" stroke-width="0.5" fill="none"/><path d="M4.6,0.3 L6.7,0.3 L6.7,1.7" stroke="#3558a8" stroke-width="0.8" fill="none"/></svg>
<svg class="r" style="left:10.60px;top:74.20px;overflow:visible" width="3" height="4.4" viewBox="0 0 3 4.4"><path d="M0.4,0.4 L2.5,2.2 L0.4,4 Z" fill="#fff" stroke="#a2a4ae" stroke-width="0.55"/></svg>
<svg class="r" style="left:16.80px;top:71.80px;overflow:visible" width="7.4" height="6.4" viewBox="0 0 7.4 6.4"><path d="M0.5,1.0 L2.6,1.0 L3.2,1.8 L6.0,1.8 L6.0,5.8 L0.5,5.8 Z" fill="#f6ecc2" stroke="#7a96cc" stroke-width="0.5"/><path d="M1.7,3.0 L7.1,3.0 L5.9,6.0 L0.4,6.0 Z" fill="#8fb2e6" stroke="#5a80c8" stroke-width="0.5"/><path d="M0.9,5.6 L2.0,3.4 L4.0,3.4" stroke="#c6daf6" stroke-width="0.5" fill="none"/><path d="M4.6,0.3 L6.7,0.3 L6.7,1.7" stroke="#3558a8" stroke-width="0.8" fill="none"/></svg>
<svg class="r" style="left:10.60px;top:85.10px;overflow:visible" width="3" height="4.4" viewBox="0 0 3 4.4"><path d="M0.4,0.4 L2.5,2.2 L0.4,4 Z" fill="#fff" stroke="#a2a4ae" stroke-width="0.55"/></svg>
<svg class="r" style="left:16.80px;top:82.70px;overflow:visible" width="7.4" height="6.4" viewBox="0 0 7.4 6.4"><path d="M0.5,1.0 L2.6,1.0 L3.2,1.8 L6.0,1.8 L6.0,5.8 L0.5,5.8 Z" fill="#f6ecc2" stroke="#7a96cc" stroke-width="0.5"/><path d="M1.7,3.0 L7.1,3.0 L5.9,6.0 L0.4,6.0 Z" fill="#8fb2e6" stroke="#5a80c8" stroke-width="0.5"/><path d="M0.9,5.6 L2.0,3.4 L4.0,3.4" stroke="#c6daf6" stroke-width="0.5" fill="none"/><path d="M4.6,0.3 L6.7,0.3 L6.7,1.7" stroke="#3558a8" stroke-width="0.8" fill="none"/></svg>
<svg class="r" style="left:240.10px;top:48.60px;overflow:visible" width="5.6" height="6.4" viewBox="0 0 5.6 6.4"><path d="M0.3,0.3 L3.6,0.3 L5.2,1.9 L5.2,6.1 L0.3,6.1 Z" fill="#fff" stroke="#b0a070" stroke-width="0.55"/><path d="M3.9,2.8 A1.3,1.3 0 1 0 3.9,4.8" stroke="#3a66b8" stroke-width="0.8" fill="none"/></svg>
<svg class="r" style="left:302.30px;top:48.60px;overflow:visible" width="5.6" height="6.4" viewBox="0 0 5.6 6.4"><path d="M0.3,0.3 L3.6,0.3 L5.2,1.9 L5.2,6.1 L0.3,6.1 Z" fill="#fff" stroke="#b0a070" stroke-width="0.55"/><path d="M3.9,2.8 A1.3,1.3 0 1 0 3.9,4.8" stroke="#3a66b8" stroke-width="0.8" fill="none"/></svg>
<svg class="r" style="left:364.60px;top:48.60px;overflow:visible" width="5.6" height="6.4" viewBox="0 0 5.6 6.4"><path d="M0.3,0.3 L3.6,0.3 L5.2,1.9 L5.2,6.1 L0.3,6.1 Z" fill="#fff" stroke="#b0a070" stroke-width="0.55"/><path d="M3.9,2.8 A1.3,1.3 0 1 0 3.9,4.8" stroke="#3a66b8" stroke-width="0.8" fill="none"/></svg>
<svg class="r" style="left:407.60px;top:49.40px;overflow:visible" width="5" height="4.2" viewBox="0 0 5 4.2"><path d="M0.5,0.4 L1.6,0.4 L2.5,1.3 L3.4,0.4 L4.5,0.4 L4.5,0.9 L3.3,2.1 L4.5,3.3 L4.5,3.8 L3.4,3.8 L2.5,2.9 L1.6,3.8 L0.5,3.8 L0.5,3.3 L1.7,2.1 L0.5,0.9 Z" fill="#fafafc" stroke="#80828e" stroke-width="0.6"/></svg>
<svg class="r" style="left:729.00px;top:47.50px;overflow:visible" width="5.4" height="2.6" viewBox="0 0 5.4 2.6"><rect x="0.3" y="0.35" width="4.8" height="1.9" rx="0.3" fill="#fff" stroke="#8e909c" stroke-width="0.55"/><path d="M0.3,0.45 L5.1,0.45" stroke="#8e909c" stroke-width="0.5"/></svg>
<svg class="r" style="left:740.00px;top:47.60px;overflow:visible" width="5.4" height="5.2" viewBox="0 0 5.4 5.2"><rect x="0.3" y="0.5" width="4.8" height="4.3" rx="0.3" fill="#fff" stroke="#858793" stroke-width="0.55"/><path d="M0.3,0.6 L5.1,0.6" stroke="#7c7e8a" stroke-width="0.9"/></svg>
<svg class="r" style="left:246.80px;top:62.20px;overflow:visible" width="4" height="4" viewBox="0 0 4 4"><circle cx="2" cy="2" r="1.7" fill="#dfe6f2" stroke="#8c98b0" stroke-width="0.55"/><path d="M0.9,2 L3.1,2 M2,0.9 L2,3.1" stroke="#4a5a80" stroke-width="0.6"/></svg>
<svg class="r" style="left:246.80px;top:120.20px;overflow:visible" width="4" height="4" viewBox="0 0 4 4"><circle cx="2" cy="2" r="1.7" fill="#f2f4f8" stroke="#b4bccc" stroke-width="0.55"/><path d="M0.9,2 L3.1,2" stroke="#8a96b0" stroke-width="0.6"/></svg>
<div class="r" style="left:573.80px;top:61.00px;width:4.80px;height:7.20px;background:#fff;border:0.6px solid #a6a8b2;border-radius:0.9px;"></div>
<svg class="r" style="left:738.00px;top:62.60px;overflow:visible" width="4.4" height="2.6" viewBox="0 0 4.4 2.6"><path d="M0.2,2.4 L2.2,0.3 L4.2,2.4 Z" fill="#8a8c94"/></svg>
<svg class="r" style="left:738.00px;top:354.60px;overflow:visible" width="4.4" height="2.6" viewBox="0 0 4.4 2.6"><path d="M0.2,0.2 L4.2,0.2 L2.2,2.3 Z" fill="#8a8c94"/></svg>
<svg class="r" style="left:255.60px;top:363.80px;overflow:visible" width="2.6" height="4.4" viewBox="0 0 2.6 4.4"><path d="M2.4,0.2 L2.4,4.2 L0.3,2.2 Z" fill="#6a6c74"/></svg>
<svg class="r" style="left:728.40px;top:363.80px;overflow:visible" width="2.6" height="4.4" viewBox="0 0 2.6 4.4"><path d="M0.2,0.2 L0.2,4.2 L2.3,2.2 Z" fill="#a6a8b0"/></svg>
<svg class="r" style="left:7.00px;top:270.20px;overflow:visible" width="7.2" height="5.6" viewBox="0 0 7.2 5.6"><path d="M0.3,3.0 L3.6,0.5 L6.9,3.0 L6.9,5.0 L3.6,2.9 L0.3,5.0 Z" fill="#d9b21c" stroke="#a8860e" stroke-width="0.45"/></svg>
<svg class="r" style="left:55.30px;top:270.90px;overflow:visible" width="5" height="4.2" viewBox="0 0 5 4.2"><path d="M0.5,0.4 L1.6,0.4 L2.5,1.3 L3.4,0.4 L4.5,0.4 L4.5,0.9 L3.3,2.1 L4.5,3.3 L4.5,3.8 L3.4,3.8 L2.5,2.9 L1.6,3.8 L0.5,3.8 L0.5,3.3 L1.7,2.1 L0.5,0.9 Z" fill="#fafafc" stroke="#80828e" stroke-width="0.6"/></svg>
<svg class="r" style="left:186.00px;top:268.80px;overflow:visible" width="8" height="7.4" viewBox="0 0 8 7.4"><path d="M0.4,3 L2.6,3 L3.2,3.8 L7.4,3.8 L7.4,7 L0.4,7 Z" fill="#a9c4ea" stroke="#5f86c8" stroke-width="0.5"/><path d="M2,3.4 L4,0.8 L6.4,2.2 L5.2,3.8" fill="#f0cf5a" stroke="#b8962e" stroke-width="0.4"/><circle cx="5.6" cy="1.6" r="1.1" fill="#58a848"/></svg>
<svg class="r" style="left:202.20px;top:269.00px;overflow:visible" width="4.6" height="2.8" viewBox="0 0 4.6 2.8"><path d="M0.3,0.3 L4.3,0.3 L2.3,2.5 Z" fill="#fff" stroke="#7c7e8a" stroke-width="0.6"/></svg>
<svg class="r" style="left:211.00px;top:269.00px;overflow:visible" width="5.4" height="2.6" viewBox="0 0 5.4 2.6"><rect x="0.3" y="0.35" width="4.8" height="1.9" rx="0.3" fill="#fff" stroke="#8e909c" stroke-width="0.55"/><path d="M0.3,0.45 L5.1,0.45" stroke="#8e909c" stroke-width="0.5"/></svg>
<svg class="r" style="left:222.10px;top:269.00px;overflow:visible" width="5.4" height="5.2" viewBox="0 0 5.4 5.2"><rect x="0.3" y="0.5" width="4.8" height="4.3" rx="0.3" fill="#fff" stroke="#858793" stroke-width="0.55"/><path d="M0.3,0.6 L5.1,0.6" stroke="#7c7e8a" stroke-width="0.9"/></svg>
<svg class="r" style="left:11.90px;top:298.60px;overflow:visible" width="7.2" height="7.2" viewBox="0 0 7.2 7.2"><rect x="0.3" y="0.3" width="6.6" height="6.6" fill="#fdfdfd" stroke="#c6c8d0" stroke-width="0.55"/><path d="M6.9,0.6 L6.9,6.9 L0.6,6.9" stroke="#b0b2bc" stroke-width="0.5" fill="none"/><path d="M2.2,2.0 L4.9,3.2 L2.0,5.6" fill="none" stroke="#f29a48" stroke-width="1.05" stroke-linejoin="round" stroke-linecap="round"/></svg>
<svg class="r" style="left:11.90px;top:309.40px;overflow:visible" width="7.2" height="7.2" viewBox="0 0 7.2 7.2"><rect x="0.3" y="0.3" width="6.6" height="6.6" fill="#fdfdfd" stroke="#c6c8d0" stroke-width="0.55"/><path d="M6.9,0.6 L6.9,6.9 L0.6,6.9" stroke="#b0b2bc" stroke-width="0.5" fill="none"/><path d="M2.2,2.0 L4.9,3.2 L2.0,5.6" fill="none" stroke="#f29a48" stroke-width="1.05" stroke-linejoin="round" stroke-linecap="round"/></svg>
<svg class="r" style="left:11.80px;top:337.00px;overflow:visible" width="7" height="7" viewBox="0 0 7 7"><path d="M0.3,1.6 L2.8,0.2 L4.4,1.8 L2.2,3.2 Z" fill="#7a7e86"/><path d="M2.8,2.4 L6.4,6.2" stroke="#a8643a" stroke-width="1.4" stroke-linecap="round"/></svg>
<svg class="r" style="left:11.80px;top:347.80px;overflow:visible" width="7" height="7" viewBox="0 0 7 7"><path d="M6.2,0.4 L3.4,3.6" stroke="#b07a3a" stroke-width="0.9"/><path d="M0.6,6.4 L2.4,2.8 L4.6,4.6 Z" fill="#e8903a"/><path d="M1.4,5.2 L3.2,3.6" stroke="#c8602a" stroke-width="0.6"/></svg>
<svg class="r" style="left:11.80px;top:358.20px;overflow:visible" width="7" height="7" viewBox="0 0 7 7"><ellipse cx="3.5" cy="3.7" rx="1.9" ry="2.3" fill="#4c9a86"/><circle cx="3.5" cy="3.7" r="0.9" fill="#bfe3d6"/><path d="M0.4,1 L2,2.4 M6.6,1 L5,2.4 M0.2,3.7 L1.4,3.7 M5.6,3.7 L6.8,3.7 M0.6,6.4 L2,5.2 M6.4,6.4 L5,5.2" stroke="#4a6f66" stroke-width="0.55"/></svg>
<svg class="r" style="left:11.60px;top:385.20px;overflow:visible" width="8" height="7" viewBox="0 0 8 7"><path d="M0.4,0.6 L3.6,0.6 M0.4,2.2 L2.6,2.2 M0.4,3.8 L2.6,3.8 M0.4,5.4 L2.6,5.4" stroke="#6a6a72" stroke-width="0.7"/><path d="M2.6,1.4 L5.2,1.4 L7.4,6.4 L4.6,6.4 Z" fill="#9ab8a0" opacity="0.85"/><path d="M3,2 L6.8,5.8 M6.2,2.2 L3.4,6.2" stroke="#5a6a7a" stroke-width="0.55"/></svg>
<svg class="r" style="left:11.60px;top:395.60px;overflow:visible" width="8" height="7" viewBox="0 0 8 7"><path d="M0.4,0.6 L3.6,0.6 M0.4,2.2 L2.6,2.2 M0.4,3.8 L2.6,3.8 M0.4,5.4 L2.6,5.4" stroke="#6a6a72" stroke-width="0.7"/><path d="M2.6,1.4 L5.2,1.4 L7.4,6.4 L4.6,6.4 Z" fill="#8a9aa8" opacity="0.85"/><path d="M3,2 L6.8,5.8 M6.2,2.2 L3.4,6.2" stroke="#5a6a7a" stroke-width="0.55"/></svg>
<svg class="r" style="left:11.60px;top:406.00px;overflow:visible" width="8" height="7" viewBox="0 0 8 7"><path d="M0.4,0.6 L3.6,0.6 M0.4,2.2 L2.6,2.2 M0.4,3.8 L2.6,3.8 M0.4,5.4 L2.6,5.4" stroke="#5a8a6a" stroke-width="0.7"/><path d="M2.6,1.4 L5.2,1.4 L7.4,6.4 L4.6,6.4 Z" fill="#7aa890" opacity="0.85"/><path d="M3,2 L6.8,5.8 M6.2,2.2 L3.4,6.2" stroke="#5a6a7a" stroke-width="0.55"/></svg>
<svg class="r" style="left:11.40px;top:432.90px;overflow:visible" width="7.6" height="7.6" viewBox="0 0 7.6 7.6"><circle cx="3.8" cy="3.8" r="3.4" fill="#cfe0f4" stroke="#8a98b0" stroke-width="0.55"/><path d="M1.6,2.2 Q3,1.2 4.4,2.4 Q5.2,3.6 4,4.6 Q2.6,5.2 2,4 Z" fill="#4ea848"/><path d="M4.6,4.6 Q6,4.4 6.2,5.4 Q5.2,6.6 4.2,6 Z" fill="#e8b83a"/></svg>
<svg class="r" style="left:11.80px;top:445.50px;overflow:visible" width="7" height="4.6" viewBox="0 0 7 4.6"><path d="M0.3,2.3 L2.2,0.3 L2.2,1.4 L4.2,1.4 L4.2,3.2 L2.2,3.2 L2.2,4.3 Z" fill="#f0b43a" stroke="#c8862a" stroke-width="0.4"/><circle cx="5.4" cy="2.3" r="1.4" fill="#f0c04a" stroke="#c8862a" stroke-width="0.4"/></svg>
<svg class="r" style="left:239.50px;top:378.30px;overflow:visible" width="5.6" height="7.4" viewBox="0 0 5.6 7.4"><path d="M0.4,0.6 L3.6,0.6 L5.2,2.2 L5.2,7 L0.4,7 Z" fill="#f4f5fa" stroke="#c4c8d6" stroke-width="0.55"/><path d="M1.6,2.0 L3.4,2.0 M2.5,1.1 L2.5,2.9" stroke="#e0584e" stroke-width="0.9"/><path d="M1.2,6.2 L2.5,4.2 L3.8,6.2 Z" fill="#f2c85a"/></svg>
<svg class="r" style="left:283.60px;top:378.90px;overflow:visible" width="6.4" height="6.6" viewBox="0 0 6.4 6.6"><path d="M1.6,0.4 L5.8,0.4 L5.8,5.6 L1.6,5.6 Z" fill="#eef2fa" stroke="#a9b8d8" stroke-width="0.55"/><path d="M0.4,4.2 L2.2,6 L4.8,2.6" stroke="#7a9ad0" stroke-width="0.9" fill="none"/><path d="M2.6,1.6 L5,1.6 M2.6,2.8 L4,2.8" stroke="#b8c4dc" stroke-width="0.5"/></svg>
<svg class="r" style="left:315.00px;top:378.80px;overflow:visible" width="7" height="6.4" viewBox="0 0 7 6.4"><rect x="0.4" y="0.4" width="6.2" height="4.6" rx="0.8" fill="#eaf0fb" stroke="#3a56a8" stroke-width="0.95"/><rect x="1.8" y="5.3" width="3.4" height="0.9" fill="#3a56a8"/></svg>
<svg class="r" style="left:353.00px;top:380.50px;overflow:visible" width="5" height="4.2" viewBox="0 0 5 4.2"><path d="M0.5,0.4 L1.6,0.4 L2.5,1.3 L3.4,0.4 L4.5,0.4 L4.5,0.9 L3.3,2.1 L4.5,3.3 L4.5,3.8 L3.4,3.8 L2.5,2.9 L1.6,3.8 L0.5,3.8 L0.5,3.3 L1.7,2.1 L0.5,0.9 Z" fill="#fafafc" stroke="#80828e" stroke-width="0.6"/></svg>
<svg class="r" style="left:364.00px;top:379.20px;overflow:visible" width="7" height="5.8" viewBox="0 0 7 5.8"><rect x="0.35" y="0.35" width="6.3" height="5.1" fill="#fbfbfd" stroke="#b4b6c2" stroke-width="0.6"/><path d="M0.4,1.7 L6.6,1.7 M2.6,0.4 L2.6,5.4" stroke="#c6c8d2" stroke-width="0.5"/></svg>
<svg class="r" style="left:851.00px;top:377.60px;overflow:visible" width="6.8" height="6.8" viewBox="0 0 6.8 6.8"><rect x="0.4" y="2.6" width="5.6" height="3.6" fill="#f0f1f5" stroke="#c0c2cc" stroke-width="0.55"/><path d="M3.4,2.8 L5.8,0.6 L6.4,1.2" stroke="#a4a6b2" stroke-width="0.9" fill="none"/><rect x="0.4" y="2.6" width="5.6" height="1.1" fill="#c8cad4"/></svg>
<svg class="r" style="left:862.30px;top:377.40px;overflow:visible" width="6.6" height="6.6" viewBox="0 0 6.6 6.6"><rect x="0.4" y="0.4" width="5.8" height="4.6" rx="0.9" fill="#e9eaee" stroke="#a9abb6" stroke-width="0.8"/><rect x="1.6" y="5.3" width="3.4" height="0.9" fill="#a9abb6"/><path d="M1.8,2 L3.4,2 M1.8,3.2 L4.4,3.2" stroke="#c2c4cc" stroke-width="0.5"/></svg>
<svg class="r" style="left:873.20px;top:379.90px;overflow:visible" width="4.4" height="2.4" viewBox="0 0 4.4 2.4"><path d="M0,0 L4.2,0 L2.1,2.2 Z" fill="#7c7e8a"/></svg>
<svg class="r" style="left:882.20px;top:377.20px;overflow:visible" width="7.4" height="7" viewBox="0 0 7.4 7"><rect x="0.4" y="1.4" width="5.6" height="5" fill="#fff" stroke="#4f7cc4" stroke-width="0.8"/><rect x="0.4" y="1.4" width="5.6" height="1.5" fill="#4f7cc4"/><path d="M6.2,0.2 L6.2,6.4 L1.6,6.4" stroke="#e3b84a" stroke-width="0.9" fill="none"/><circle cx="6.2" cy="1.2" r="1.1" fill="#f2cf5a"/></svg>
<svg class="r" style="left:893.40px;top:380.00px;overflow:visible" width="4.6" height="2.5" viewBox="0 0 4.6 2.5"><path d="M0,0 L4.4,0 L2.2,2.3 Z" fill="#111"/></svg>
<svg class="r" style="left:903.00px;top:378.00px;overflow:visible" width="5.4" height="2.6" viewBox="0 0 5.4 2.6"><rect x="0.3" y="0.35" width="4.8" height="1.9" rx="0.3" fill="#fff" stroke="#8e909c" stroke-width="0.55"/><path d="M0.3,0.45 L5.1,0.45" stroke="#8e909c" stroke-width="0.5"/></svg>
<svg class="r" style="left:914.00px;top:378.00px;overflow:visible" width="5.4" height="5.2" viewBox="0 0 5.4 5.2"><rect x="0.3" y="0.5" width="4.8" height="4.3" rx="0.3" fill="#fff" stroke="#858793" stroke-width="0.55"/><path d="M0.3,0.6 L5.1,0.6" stroke="#7c7e8a" stroke-width="0.9"/></svg>
<div class="r" style="left:879.90px;top:407.60px;width:35.30px;height:33.60px;background:#000;border-radius:2.6px;"></div>
<svg class="r" style="left:884.00px;top:412.00px;overflow:visible" width="28" height="26" viewBox="0 0 28 26"><path d="M13.8,4.4 L22.3,14.9 L19.3,14.9 L19.3,18.0 L21.6,18.0 L21.6,21.4 L6.0,21.4 L6.0,18.0 L8.3,18.0 L8.3,14.9 L5.3,14.9 Z" fill="none" stroke="#fff" stroke-width="1.3" stroke-linejoin="miter"/><path d="M11.9,12.1 L14.0,10.4 L14.0,18.1" fill="none" stroke="#fff" stroke-width="1.45"/></svg>
<svg class="r" style="left:756.60px;top:48.20px;overflow:visible" width="7" height="7.4" viewBox="0 0 7 7.4"><rect x="0.2" y="0.2" width="2.9" height="2.9" fill="#3f72c6"/><rect x="0.2" y="4.2" width="2.9" height="2.9" fill="#3f72c6"/><path d="M0.8,1.65 L2.5,1.65 M1.65,0.8 L1.65,2.5 M0.8,5.65 L2.5,5.65" stroke="#fff" stroke-width="0.6"/><path d="M3.9,1.4 L6.7,1.4 M3.9,2.9 L6.0,2.9 M3.9,5.6 L6.7,5.6" stroke="#5f8ad0" stroke-width="0.75"/><path d="M3.4,1.6 L3.4,5.6" stroke="#8fb0e0" stroke-width="0.5"/></svg>
<svg class="r" style="left:789.00px;top:50.00px;overflow:visible" width="5" height="4.2" viewBox="0 0 5 4.2"><path d="M0.5,0.4 L1.6,0.4 L2.5,1.3 L3.4,0.4 L4.5,0.4 L4.5,0.9 L3.3,2.1 L4.5,3.3 L4.5,3.8 L3.4,3.8 L2.5,2.9 L1.6,3.8 L0.5,3.8 L0.5,3.3 L1.7,2.1 L0.5,0.9 Z" fill="#fafafc" stroke="#80828e" stroke-width="0.6"/></svg>
<svg class="r" style="left:800.90px;top:49.00px;overflow:visible" width="6.4" height="5.6" viewBox="0 0 6.4 5.6"><rect x="0.35" y="0.35" width="5.7" height="4.9" fill="#fbfbfd" stroke="#a9b4cc" stroke-width="0.6"/><rect x="0.35" y="0.35" width="5.7" height="1.2" fill="#b9c6e0"/></svg>
<svg class="r" style="left:832.30px;top:48.60px;overflow:visible" width="6.4" height="6.4" viewBox="0 0 6.4 6.4"><circle cx="3.2" cy="3.2" r="2.8" fill="#dff0de" stroke="#8cc48a" stroke-width="0.7"/><circle cx="3.2" cy="3.2" r="1.3" fill="#79bb76"/></svg>
<svg class="r" style="left:867.70px;top:48.60px;overflow:visible" width="4.6" height="6.6" viewBox="0 0 4.6 6.6"><rect x="0.35" y="0.35" width="3.9" height="5.9" fill="#eeeef2" stroke="#a4a6b2" stroke-width="0.6"/><path d="M1.2,1.8 L3.4,1.8 M1.2,3.2 L3.4,3.2 M1.2,4.6 L3.4,4.6" stroke="#b4b6c0" stroke-width="0.5"/></svg>
<svg class="r" style="left:902.80px;top:47.70px;overflow:visible" width="5.4" height="2.6" viewBox="0 0 5.4 2.6"><rect x="0.3" y="0.35" width="4.8" height="1.9" rx="0.3" fill="#fff" stroke="#8e909c" stroke-width="0.55"/><path d="M0.3,0.45 L5.1,0.45" stroke="#8e909c" stroke-width="0.5"/></svg>
<svg class="r" style="left:914.00px;top:47.70px;overflow:visible" width="5.4" height="5.2" viewBox="0 0 5.4 5.2"><rect x="0.3" y="0.5" width="4.8" height="4.3" rx="0.3" fill="#fff" stroke="#858793" stroke-width="0.55"/><path d="M0.3,0.6 L5.1,0.6" stroke="#7c7e8a" stroke-width="0.9"/></svg>
<svg class="r" style="left:835.00px;top:61.00px;overflow:visible" width="6.4" height="6.4" viewBox="0 0 6.4 6.4"><circle cx="1.4" cy="1.6" r="1.1" fill="#b6b8c2"/><circle cx="4.4" cy="2" r="1.5" fill="#c2c4ce"/><rect x="1" y="3.4" width="3" height="2.6" rx="0.6" fill="#8e909c"/></svg>
<svg class="r" style="left:845.80px;top:61.20px;overflow:visible" width="6.4" height="6.2" viewBox="0 0 6.4 6.2"><rect x="0.35" y="0.35" width="5.6" height="5.3" rx="0.5" fill="#eef4fc" stroke="#6f98d4" stroke-width="0.7"/><path d="M1.6,3 L4.6,3" stroke="#3f6fc0" stroke-width="0.9"/></svg>
<svg class="r" style="left:856.00px;top:60.60px;overflow:visible" width="7.6" height="7.6" viewBox="0 0 7.6 7.6"><path d="M1.2,0.4 L1.2,6.4" stroke="#7a9cd0" stroke-width="0.8"/><path d="M0.2,5 L1.2,6.8 L2.2,5 Z" fill="#5a80c0"/><path d="M3.2,3 L4.2,0.4 L5.2,3 M3.6,2.1 L4.8,2.1" stroke="#2a8a4a" stroke-width="0.65" fill="none"/><path d="M4.4,4.2 L6.6,4.2 L4.4,7 L6.8,7" stroke="#8a2aa8" stroke-width="0.7" fill="none"/></svg>
<svg class="r" style="left:867.00px;top:60.80px;overflow:visible" width="7.6" height="7.2" viewBox="0 0 7.6 7.2"><rect x="1.4" y="1.2" width="4.4" height="3.8" rx="0.5" fill="#dbe6f8" stroke="#4a78c4" stroke-width="0.8"/><path d="M0.4,0.4 L6.8,6.6" stroke="#2a5ab0" stroke-width="0.85"/></svg>
<svg class="r" style="left:878.50px;top:60.80px;overflow:visible" width="7" height="7" viewBox="0 0 7 7"><path d="M0.4,1 L6,6.6" stroke="#2a5ab0" stroke-width="0.85"/><path d="M1,5.6 L4.6,1.4" stroke="#6f92cc" stroke-width="0.9"/><path d="M5.2,0.2 L6.6,0.2 L5.2,1.6 L6.6,1.6" stroke="#d8483e" stroke-width="0.55" fill="none"/></svg>
<svg class="r" style="left:890.70px;top:62.00px;overflow:visible" width="4.6" height="4.6" viewBox="0 0 4.6 4.6"><circle cx="2.3" cy="2.3" r="1.75" fill="#4aa452"/><circle cx="1.8" cy="1.8" r="0.6" fill="#9fd6a2"/></svg>
<svg class="r" style="left:900.30px;top:60.80px;overflow:visible" width="7.8" height="7" viewBox="0 0 7.8 7"><path d="M0.6,1.2 L7,1.2 M0.6,3.4 L7,3.4 M0.6,5.6 L7,5.6" stroke="#18181c" stroke-width="1"/><path d="M3.8,0.2 L3.8,6.6 M1.8,0.6 L5.8,6.2 M5.8,0.6 L1.8,6.2" stroke="#18181c" stroke-width="0.7"/></svg>
<svg class="r" style="left:915.20px;top:62.20px;overflow:visible" width="4.6" height="2.8" viewBox="0 0 4.6 2.8"><path d="M0.3,0.3 L4.3,0.3 L2.3,2.5 Z" fill="#fff" stroke="#7c7e8a" stroke-width="0.6"/></svg>
<svg class="r" style="left:770.20px;top:72.80px;overflow:visible" width="5.8" height="5" viewBox="0 0 5.8 5"><rect x="0.2" y="0.2" width="2.2" height="2.6" fill="#2f62b0"/><rect x="3.4" y="0.2" width="2.2" height="2.6" fill="#2f62b0"/><rect x="0.2" y="2.6" width="5.4" height="2.2" fill="#2f62b0"/><rect x="1.0" y="0.8" width="0.8" height="0.9" fill="#cfe0f6"/></svg>
<svg class="r" style="left:770.40px;top:84.20px;overflow:visible" width="5.4" height="5.4" viewBox="0 0 5.4 5.4"><circle cx="2.7" cy="2.7" r="2.3" fill="#fff" stroke="#58a868" stroke-width="0.6"/><path d="M0.4,2.7 L5,2.7 M2.7,0.4 L2.7,5" stroke="#58a868" stroke-width="0.5"/></svg>
<svg class="r" style="left:771.20px;top:95.60px;overflow:visible" width="4" height="4" viewBox="0 0 4 4"><circle cx="2" cy="2" r="1.8" fill="#3f9e46"/></svg>
<svg class="r" style="left:825.70px;top:31.40px;overflow:visible" width="7.4" height="6.6" viewBox="0 0 7.4 6.6"><rect x="0.35" y="1.6" width="5.6" height="4.6" fill="#f4f1e2" stroke="#8a8c98" stroke-width="0.6"/><rect x="0.35" y="1.6" width="5.6" height="1.1" fill="#a9adbc"/><path d="M2.2,3.2 L2.2,6.2" stroke="#b4b6c2" stroke-width="0.5"/><path d="M5.8,0 L6.4,1.1 L7.4,1.3 L6.6,2.1 L6.8,3.2 L5.8,2.6 L4.8,3.2 L5,2.1 L4.2,1.3 L5.2,1.1 Z" fill="#f2c240"/></svg>
<svg class="r" style="left:841.60px;top:30.60px;overflow:visible" width="7" height="7" viewBox="0 0 7 7"><rect x="0.35" y="0.35" width="5.8" height="5.8" fill="#f8f9fc" stroke="#6a7a9a" stroke-width="0.6"/><rect x="0.35" y="0.35" width="5.8" height="1.2" fill="#8fa4c8"/><path d="M2.4,1.6 L2.4,6.1" stroke="#a9b4cc" stroke-width="0.5"/><rect x="3.4" y="3.2" width="3.4" height="3.4" fill="#e9eefa" stroke="#3a5a9a" stroke-width="0.5"/><path d="M5.9,4.3 A0.9,0.9 0 1 0 5.9,5.6" stroke="#2a4a90" stroke-width="0.55" fill="none"/></svg>
<svg class="r" style="left:877.80px;top:30.60px;overflow:visible" width="7" height="7.2" viewBox="0 0 7 7.2"><ellipse cx="3.5" cy="3.8" rx="1.9" ry="2.4" fill="#4c9a86"/><circle cx="3.5" cy="3.8" r="0.95" fill="#c8e8dc"/><path d="M0.4,1 L2,2.4 M6.6,1 L5,2.4 M0.2,3.8 L1.4,3.8 M5.6,3.8 L6.8,3.8 M0.6,6.6 L2,5.3 M6.4,6.6 L5,5.3" stroke="#3f6a60" stroke-width="0.6"/></svg>
<div class="r" style="left:898.00px;top:489.20px;width:14.20px;height:5.40px;background:linear-gradient(to bottom,#f2f2f4,#d2d3d8);border:0.7px solid #aeb0ba;border-radius:1px;"></div>
<svg class="r" style="left:915.40px;top:489.20px;overflow:visible" width="7.4" height="5.4" viewBox="0 0 7.4 5.4"><rect x="0.3" y="0.3" width="4.6" height="3.2" rx="0.5" fill="#7fc07a" stroke="#4a9a4a" stroke-width="0.5"/><rect x="2.2" y="1.8" width="4.8" height="3.2" rx="0.5" fill="#a6d6a2" stroke="#58a258" stroke-width="0.5"/></svg>
</body></html>
